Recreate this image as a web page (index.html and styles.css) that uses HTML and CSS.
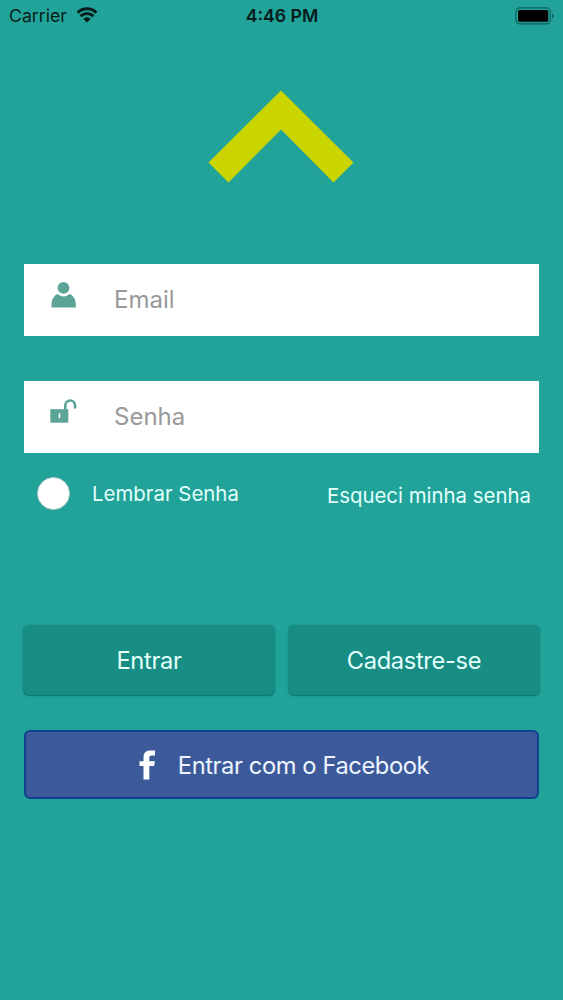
FILE: index.html
```html
<!DOCTYPE html>
<html lang="pt-BR">
<head>
  <meta charset="UTF-8">
  <meta name="viewport" content="width=device-width, initial-scale=1.0">
  <title>Login</title>
  <link rel="stylesheet" href="styles.css">
</head>
<body>
  <header class="status-bar">
    <div class="carrier">
      <span class="carrier-name">Carrier</span>
      <svg class="wifi" width="22" height="16" viewBox="0 0 22 16">
        <path d="M1.6 5.6a13.3 13.3 0 0 1 18.8 0M4.600 9.300a9 9 0 0 1 12.800 0" fill="none" stroke="#071c1b" stroke-width="2.9"/>
        <path d="M11 15.600l-3.7-3.7a5.2 5.2 0 0 1 7.4 0z" fill="#071c1b"/>
      </svg>
    </div>
    <span class="time">4:46 PM</span>
    <svg class="battery" width="40" height="18" viewBox="0 0 40 18">
      <rect x="0.9" y="0.9" width="34.4" height="16" rx="4" fill="none" stroke="#0c615c" stroke-width="1.2"/>
      <rect x="3" y="3" width="30.2" height="11.8" rx="1.5" fill="#000"/>
      <path d="M37 6.4c2.2.8 2.2 4.2 0 5z" fill="#0c615c"/>
    </svg>
  </header>

  <main class="container">
    <svg class="logo" width="147" height="93" viewBox="0 0 147 93">
      <path d="M73 0.5L145.5 72.5L125.5 92.5L73 39.5L20.5 92.5L0.5 72.5Z" fill="#cad400"/>
    </svg>

    <form id="loginForm">
      <div class="field">
        <svg class="field-icon" width="28" height="28" viewBox="0 0 28 28">
          <circle cx="13.500" cy="6.800" r="5.900" fill="#5ba497"/>
          <path d="M1.500 26.500v-3c0-5.500 3-9.300 6-10.500 3.700 3.200 8.400 3.200 12.100 0 3.200 1.200 6.200 5 6.200 10.500v3z" fill="#5ba497"/>
        </svg>
        <input type="email" class="input" placeholder="Email">
      </div>
      <div class="field">
        <svg class="field-icon" width="28" height="28" viewBox="0 0 28 28">
          <path d="M15.300 12V7.300a4.850 4.850 0 0 1 9.700 0V10.500" fill="none" stroke="#5ba497" stroke-width="2.600"/>
          <path d="M0.300 11.200h18v13.500h-18z" fill="#5ba497"/>
          <path d="M8.700 15.200h1.600v5h-1.600z" fill="#fff"/>
        </svg>
        <input type="password" class="input" placeholder="Senha">
      </div>

      <div class="options">
        <label class="remember">
          <input type="checkbox" class="check">
          <span>Lembrar Senha</span>
        </label>
        <a href="#" class="forgot">Esqueci minha senha</a>
      </div>

      <div class="button-container">
        <button type="submit" class="btn">Entrar</button>
        <button type="button" class="btn">Cadastre-se</button>
      </div>
      <button type="button" class="btn-facebook">
        <svg class="fb-icon" width="17" height="30" viewBox="0 0 17 30">
          <path d="M4.500 29.500V16H0.500V11.200H4.500V7.500C4.500 2.900 7 0.500 11 0.500H16V5.500H12.800C10.900 5.500 10.300 6.400 10.300 8V11.200H15.800L15.200 16H10.300V29.500Z" fill="#fff"/>
        </svg>
        <span>Entrar com o Facebook</span>
      </button>
    </form>
  </main>
</body>
</html>
```
FILE: styles.css
```css
* {
  box-sizing: border-box;
}
body {
  font-family: 'Inter', sans-serif;
  background: #21a399;
  margin: 0;
  min-height: 1000px;
  color: #e2fffc;
}
.status-bar {
  display: grid;
  grid-template-columns: 1fr auto 1fr;
  align-items: center;
  height: 31px;
  padding: 0 8px 0 9px;
  color: #071c1b;
}
.carrier {
  display: flex;
  align-items: center;
  gap: 9px;
}
.carrier-name {
  font-size: 17.7px;
}
.wifi {
  margin-top: -2px;
}
.time {
  font-size: 17.7px;
  font-weight: 600;
}
.battery {
  justify-self: end;
}
.container {
  padding: 59px 24px 0;
}
.logo {
  display: block;
  margin: 0 auto 81px;
}
.field {
  display: flex;
  align-items: flex-start;
  height: 72px;
  margin-bottom: 45px;
  padding-left: 26px;
  background: #fff;
}
.field-icon {
  flex: none;
  margin-top: 17px;
}
.input {
  flex: 1;
  min-width: 0;
  height: 70px;
  padding: 0 20px 0 36px;
  border: none;
  outline: none;
  background: none;
  font-family: inherit;
  font-size: 24px;
  color: #333;
}
.input::placeholder {
  color: #999;
}
.options {
  display: flex;
  justify-content: space-between;
  align-items: center;
  height: 32px;
  margin-top: -21px;
  padding: 0 8px 0 13px;
  font-size: 20.4px;
}
.remember {
  display: flex;
  align-items: center;
  gap: 22px;
}
.check {
  appearance: none;
  width: 33px;
  height: 33px;
  margin: 0;
  border: 1px solid #b5c9c7;
  border-radius: 50%;
  background: #fff;
}
.forgot {
  margin-top: 4px;
  color: inherit;
  text-decoration: none;
}
.button-container {
  display: flex;
  gap: 13px;
  margin: 116px -1px 34px;
}
.btn {
  flex: 1;
  height: 71px;
  padding: 0;
  border: none;
  border-radius: 6px;
  background: #188d83;
  box-shadow: inset 0 -1px 1px #107970, 0 0 2px #15877e;
  font-family: inherit;
  font-size: 23.7px;
  letter-spacing: -0.35px;
  color: #e2fffc;
}
.btn-facebook {
  display: flex;
  align-items: center;
  justify-content: center;
  gap: 22px;
  width: 100%;
  height: 69px;
  padding: 1px 0 0 5px;
  border: 2px solid #10418f;
  border-radius: 6px;
  background: #3c5a99;
  box-shadow: inset 0 1px 1px #4360ac;
  font-family: inherit;
  font-size: 23.7px;
  letter-spacing: -0.4px;
  color: #edf4ff;
}
```
